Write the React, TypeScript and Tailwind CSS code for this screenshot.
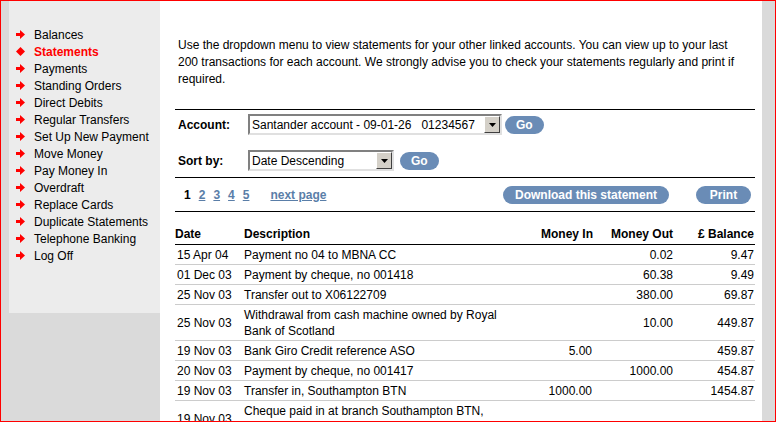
import React from "react";

const nav = ["Balances","Statements","Payments","Standing Orders","Direct Debits","Regular Transfers","Set Up New Payment","Move Money","Pay Money In","Overdraft","Replace Cards","Duplicate Statements","Telephone Banking","Log Off"];

const rows: [string, string[], string, string, string][] = [
  ["15 Apr 04", ["Payment no 04 to MBNA CC"], "", "0.02", "9.47"],
  ["01 Dec 03", ["Payment by cheque, no 001418"], "", "60.38", "9.49"],
  ["25 Nov 03", ["Transfer out to X06122709"], "", "380.00", "69.87"],
  ["25 Nov 03", ["Withdrawal from cash machine owned by Royal", "Bank of Scotland"], "", "10.00", "449.87"],
  ["19 Nov 03", ["Bank Giro Credit reference ASO"], "5.00", "", "459.87"],
  ["20 Nov 03", ["Payment by cheque, no 001417"], "", "1000.00", "454.87"],
  ["19 Nov 03", ["Transfer in, Southampton BTN"], "1000.00", "", "1454.87"],
  ["19 Nov 03", ["Cheque paid in at branch Southampton BTN,", "\u00a0"], "", "", ""],
];

const Arrow = ({ diamond }: { diamond?: boolean }) => (
  <svg width="9" height="9" viewBox="0 0 9 9" className="shrink-0">
    {diamond ? <path d="M4.5 0 L9 4.5 L4.5 9 L0 4.5Z" fill="#ff0000" /> : <path d="M0 3 H4 V0 L9 4.5 L4 9 V6 H0Z" fill="#ff0000" />}
  </svg>
);

const Pill = ({ children, w }: { children: React.ReactNode; w?: string }) => (
  <span className={`inline-flex items-center justify-center h-[18px] rounded-full bg-[#6a8cb6] text-white font-bold text-[12px] ${w ?? "px-[11px]"}`}>{children}</span>
);

const Select = ({ text, w }: { text: string; w: string }) => (
  <div className={`flex items-center h-[21px] border-2 border-t-[#808080] border-l-[#808080] border-b-[#e0e0e0] border-r-[#e0e0e0] bg-white ${w}`}>
    <span className="flex-1 pl-[2px] text-[12px] whitespace-pre overflow-hidden">{text}</span>
    <span className="w-[16px] h-[17px] bg-[#d4d0c8] border border-t-white border-l-white border-b-[#404040] border-r-[#404040] flex items-center justify-center">
      <svg width="7" height="4" viewBox="0 0 7 4"><path d="M0 0H7L3.5 4Z" fill="#000" /></svg>
    </span>
  </div>
);

export default function App() {
  return (
    <div className="w-[776px] h-[422px] border border-[#ff0000] bg-[#dadada] flex overflow-hidden text-black" style={{ fontFamily: '"Liberation Sans", Arial, sans-serif' }}>
      <div className="w-[8px]" />
      <div className="w-[151px] h-[312px] bg-[#ececec] pt-[25px] pl-[7px]">
        {nav.map((n, i) => (
          <div key={n} className="flex items-center h-[17px] gap-[9px]">
            <Arrow diamond={i === 1} />
            <span className={`text-[12px] ${i === 1 ? "text-[#ff0000] font-bold" : ""}`}>{n}</span>
          </div>
        ))}
      </div>
      <div className="w-[602px] bg-white pl-[15px] pr-[7px] pt-[36px] text-[12px]">
        <p className="pl-[3px] leading-[17px] pr-[20px]">Use the dropdown menu to view statements for your other linked accounts. You can view up to your last 200 transactions for each account. We strongly advise you to check your statements regularly and print if required.</p>
        <div className="mt-[21px] border-t border-black" />
        <div className="flex items-center h-[27px] mt-[1px] pl-[3px]">
          <span className="font-bold w-[70px]">Account:</span>
          <Select text="Santander account - 09-01-26   01234567" w="w-[254px]" />
          <span className="ml-[3px]"><Pill>Go</Pill></span>
        </div>
        <div className="flex items-center h-[27px] mt-[9px] pl-[3px]">
          <span className="font-bold w-[70px]">Sort by:</span>
          <Select text="Date Descending" w="w-[146px]" />
          <span className="ml-[6px]"><Pill>Go</Pill></span>
        </div>
        <div className="mt-[3px] border-t border-black" />
        <div className="flex items-center h-[33px] pl-[9px]">
          <span className="font-bold">1</span>
          {["2","3","4","5"].map(n => <a key={n} className="ml-[8px] underline text-[#5a7ea8] font-bold">{n}</a>)}
          <a className="ml-[21px] underline text-[#5a7ea8] font-bold">next page</a>
          <span className="ml-auto"><Pill w="w-[166px]">Download this statement</Pill></span>
          <span className="ml-[27px] mr-[4px]"><Pill w="w-[55px]">Print</Pill></span>
        </div>
        <div className="border-t border-black" />
        <div className="flex items-center h-[33px] font-bold border-b border-black pt-[12px] pb-[1px]">
          <span className="w-[69px]">Date</span>
          <span className="flex-1">Description</span>
          <span className="w-[90px] text-right">Money In</span>
          <span className="w-[80px] text-right">Money Out</span>
          <span className="w-[82px] text-right pr-[1px]">£ Balance</span>
        </div>
        {rows.map((r, i) => (
          <div key={i} className={`flex items-center border-b border-[#cccccc] ${r[1].length > 1 ? "h-[36px]" : "h-[20px]"}`}>
            <span className="w-[69px] pl-[2px]">{r[0]}</span>
            <span className="flex-1 leading-[16px]">{r[1].map((l, j) => <div key={j}>{l}</div>)}</span>
            <span className="w-[90px] text-right pr-[1px]">{r[2]}</span>
            <span className="w-[80px] text-right">{r[3]}</span>
            <span className="w-[82px] text-right pr-[1px]">{r[4]}</span>
          </div>
        ))}
      </div>
    </div>
  );
}
